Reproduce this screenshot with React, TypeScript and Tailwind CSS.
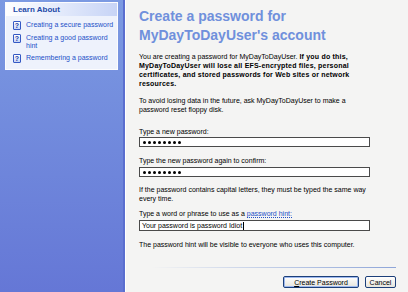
import React from 'react';

function HelpIcon() {
  return (
    <span className="mt-[0px] flex h-[9px] w-[8px] shrink-0 items-center justify-center rounded-[1px] border border-[#3559c4] bg-gradient-to-b from-white to-[#c5d3f5] text-[7px] font-bold leading-none text-[#1b3ea6]">
      ?
    </span>
  );
}

function LearnLink({ children }: { children: React.ReactNode }) {
  return (
    <div className="flex items-start gap-[5px]">
      <HelpIcon />
      <span className="whitespace-nowrap text-[7px] leading-[8px] text-[#2350c8]">{children}</span>
    </div>
  );
}

function PasswordBox() {
  return (
    <div className="flex h-[10px] w-[231px] items-center gap-[2px] border border-[#4a4a4a] bg-white pl-[3px]">
      {Array.from({ length: 8 }).map((_, i) => (
        <span key={i} className="h-[3px] w-[3px] rounded-full bg-black" />
      ))}
    </div>
  );
}

function XpButton({ children, focused }: { children: React.ReactNode; focused?: boolean }) {
  return (
    <button
      className={
        'flex h-[12px] items-center justify-center rounded-[2px] border border-[#1c3f7a] bg-gradient-to-b from-white to-[#e6e5dd] text-[7px] leading-none text-black ' +
        (focused ? 'w-[76px] shadow-[inset_0_0_0_1px_#9db8ee]' : 'w-[31px]')
      }
    >
      {children}
    </button>
  );
}

export default function App() {
  return (
    <div className="flex h-[292px] w-[408px] overflow-hidden bg-[#f4f4f3] font-['Liberation_Sans',Arial,sans-serif]">
      {/* Left task pane */}
      <aside className="w-[123px] shrink-0 bg-gradient-to-b from-[#7c9ae2] to-[#6577d6] px-[5px] pt-[2px]">
        <div className="border border-white/80 bg-[#eef2fc]">
          <div className="bg-gradient-to-r from-white to-[#c7d4f6] px-[7px] py-[2px] text-[8px] font-bold leading-[9px] text-[#1f4aa8]">
            Learn About
          </div>
          <div className="flex flex-col gap-[4px] pb-[6px] pl-[7px] pr-[2px] pt-[5px]">
            <LearnLink>Creating a secure password</LearnLink>
            <LearnLink>
              Creating a good password
              <br />
              hint
            </LearnLink>
            <LearnLink>Remembering a password</LearnLink>
          </div>
        </div>
      </aside>
      <div className="w-[2px] shrink-0 bg-[#5a6ecf]" />
      <div className="w-px shrink-0 bg-white" />

      {/* Main content */}
      <main className="flex flex-1 flex-col pl-[13px] pr-[12px] pt-[7px] text-black">
        <h1 className="text-[14px] font-bold leading-[19px] text-[#7090dc]">
          Create a password for
          <br />
          MyDayToDayUser's account
        </h1>

        <p className="mt-[7px] text-[7px] leading-[9px]">
          You are creating a password for MyDayToDayUser.{' '}
          <b className="tracking-[0.2px]">
            If you do this,
            <br />
            MyDayToDayUser will lose all EFS-encrypted files, personal
            <br />
            certificates, and stored passwords for Web sites or network
            <br />
            resources.
          </b>
        </p>

        <p className="mt-[8px] text-[7px] leading-[9px]">
          To avoid losing data in the future, ask MyDayToDayUser to make a
          <br />
          password reset floppy disk.
        </p>

        <div className="mt-[13px] text-[7px] leading-[9px]">Type a new password:</div>
        <div className="mt-[1px]">
          <PasswordBox />
        </div>

        <div className="mt-[9px] text-[7px] leading-[9px]">Type the new password again to confirm:</div>
        <div className="mt-[2px]">
          <PasswordBox />
        </div>

        <p className="mt-[8px] text-[7px] leading-[9px]">
          If the password contains capital letters, they must be typed the same way
          <br />
          every time.
        </p>

        <div className="mt-[6px] text-[7px] leading-[9px]">
          Type a word or phrase to use as a{' '}
          <span className="border-b border-dotted border-[#2350c8] text-[#2350c8]">password hint:</span>
        </div>
        <div className="mt-[2px] flex h-[11px] w-[231px] items-center border border-[#4a4a4a] bg-white pl-[2px] text-[7px] leading-none">
          Your password is password Idiot
          <span className="ml-px h-[8px] w-px bg-black" />
        </div>

        <p className="mt-[9px] text-[7px] leading-[9px]">
          The password hint will be visible to everyone who uses this computer.
        </p>

        <footer className="mt-auto pb-[4px]">
          <div className="ml-[12px] h-px bg-gradient-to-r from-[#f4f4f3] to-[#8ea5d8]" />
          <div className="mt-[8px] flex justify-end gap-[6px]">
            <XpButton focused>
              <span>
                <span className="underline">C</span>reate Password
              </span>
            </XpButton>
            <XpButton>Cancel</XpButton>
          </div>
        </footer>
      </main>
    </div>
  );
}
